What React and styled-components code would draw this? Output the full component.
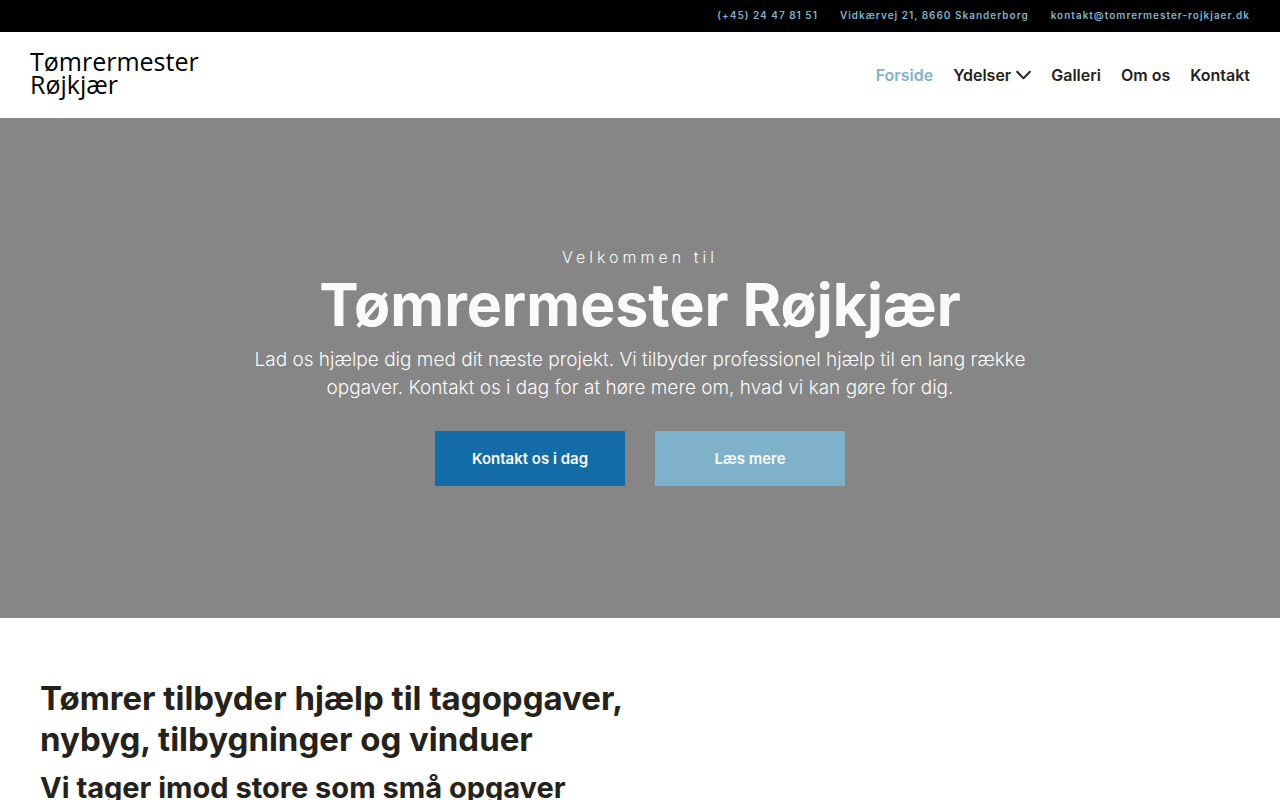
import React from "react";
import styled, { createGlobalStyle } from "styled-components";

const GlobalStyle = createGlobalStyle`
  *, *::before, *::after { box-sizing: border-box; }
  body {
    margin: 0;
    background: #fff;
    color: #25221b;
    font-family: Inter, "Liberation Sans", sans-serif;
    font-size: 16px;
  }
  h1, h2, h3, p, ul { margin: 0; padding: 0; }
`;

const TopBar = styled.address`
  display: flex;
  justify-content: flex-end;
  flex-wrap: wrap;
  gap: 0 22px;
  padding: 5px 30px 7px;
  background: #000;
  font-style: normal;
`;

const TopLink = styled.a`
  color: #7fb2ca;
  font-size: 10px;
  font-weight: 600;
  line-height: 20px;
  letter-spacing: 1px;
  text-decoration: none;
`;

const Header = styled.header`
  display: flex;
  align-items: center;
  justify-content: space-between;
  gap: 20px;
  min-height: 86px;
  padding: 18px 30px;
`;

const Logo = styled.a`
  align-self: flex-start;
  color: #000;
  font-family: "Open Sans", "Noto Sans", sans-serif;
  font-size: 25px;
  line-height: 23px;
  text-decoration: none;
`;

const NavList = styled.ul`
  display: flex;
  flex-wrap: wrap;
  gap: 0 20px;
  list-style: none;
`;

const NavLink = styled.a`
  display: flex;
  align-items: center;
  gap: 5px;
  color: ${(p) => (p.$active ? "#7fb2ca" : "#25221b")};
  font-size: 16px;
  font-weight: 600;
  line-height: 24px;
  text-decoration: none;
`;

const Hero = styled.section`
  display: flex;
  flex-direction: column;
  align-items: center;
  justify-content: center;
  min-height: 500px;
  padding: 40px 20px 46px;
  background: #868686;
  color: #fafafa;
  text-align: center;
`;

const Eyebrow = styled.p`
  font-size: 16px;
  font-weight: 300;
  line-height: 24px;
  letter-spacing: 4px;
`;

const HeroTitle = styled.h1`
  margin-bottom: 5px;
  font-size: 59px;
  font-weight: 700;
  line-height: 72px;
`;

const HeroText = styled.p`
  max-width: 780px;
  font-size: 19px;
  font-weight: 300;
  line-height: 28px;
`;

const Actions = styled.div`
  display: flex;
  flex-wrap: wrap;
  justify-content: center;
  gap: 30px;
  margin-top: 29px;
`;

const Button = styled.button`
  width: 190px;
  height: 55px;
  border: 0;
  padding: 0;
  background: ${(p) => (p.$primary ? "#136ca7" : "#7fb2ca")};
  color: #fafafa;
  font: 600 15px Inter, "Liberation Sans", sans-serif;
  cursor: pointer;
`;

const Intro = styled.section`
  padding: 60px 40px;
`;

const IntroColumn = styled.div`
  display: flex;
  flex-direction: column;
  gap: 10px;
  max-width: 600px;
`;

const IntroTitle = styled.h2`
  font-size: 33px;
  font-weight: 700;
  line-height: 41px;
`;

const IntroSubtitle = styled.h3`
  font-size: 29px;
  font-weight: 700;
  line-height: 36px;
`;

const Chevron = () => (
  <svg width="15" height="10" viewBox="0 0 15 10" fill="none" aria-hidden="true">
    <path d="M1.2 1.8 7.5 8.4 13.8 1.8" stroke="currentColor" strokeWidth="2" strokeLinecap="round" strokeLinejoin="round" />
  </svg>
);

const navItems = [
  { label: "Forside", active: true },
  { label: "Ydelser", menu: true },
  { label: "Galleri" },
  { label: "Om os" },
  { label: "Kontakt" },
];

export default function App() {
  return (
    <>
      <GlobalStyle />
      <TopBar>
        <TopLink href="tel:+4524478151">(+45) 24 47 81 51</TopLink>
        <TopLink href="#adresse">Vidkærvej 21, 8660 Skanderborg</TopLink>
        <TopLink href="mailto:kontakt@tomrermester-rojkjaer.dk">kontakt@tomrermester-rojkjaer.dk</TopLink>
      </TopBar>
      <Header>
        <Logo href="#forside">Tømrermester<br />Røjkjær</Logo>
        <nav>
          <NavList>
            {navItems.map((item) => (
              <li key={item.label}>
                <NavLink href={"#" + item.label.toLowerCase().replace(" ", "-")} $active={item.active}>
                  {item.label}
                  {item.menu && <Chevron />}
                </NavLink>
              </li>
            ))}
          </NavList>
        </nav>
      </Header>
      <main>
        <Hero>
          <Eyebrow>Velkommen til</Eyebrow>
          <HeroTitle>Tømrermester Røjkjær</HeroTitle>
          <HeroText>
            Lad os hjælpe dig med dit næste projekt. Vi tilbyder professionel hjælp til en lang række
            opgaver. Kontakt os i dag for at høre mere om, hvad vi kan gøre for dig.
          </HeroText>
          <Actions>
            <Button type="button" $primary>Kontakt os i dag</Button>
            <Button type="button">Læs mere</Button>
          </Actions>
        </Hero>
        <Intro>
          <IntroColumn>
            <IntroTitle>Tømrer tilbyder hjælp til tagopgaver, nybyg, tilbygninger og vinduer</IntroTitle>
            <IntroSubtitle>Vi tager imod store som små opgaver</IntroSubtitle>
          </IntroColumn>
        </Intro>
      </main>
    </>
  );
}
